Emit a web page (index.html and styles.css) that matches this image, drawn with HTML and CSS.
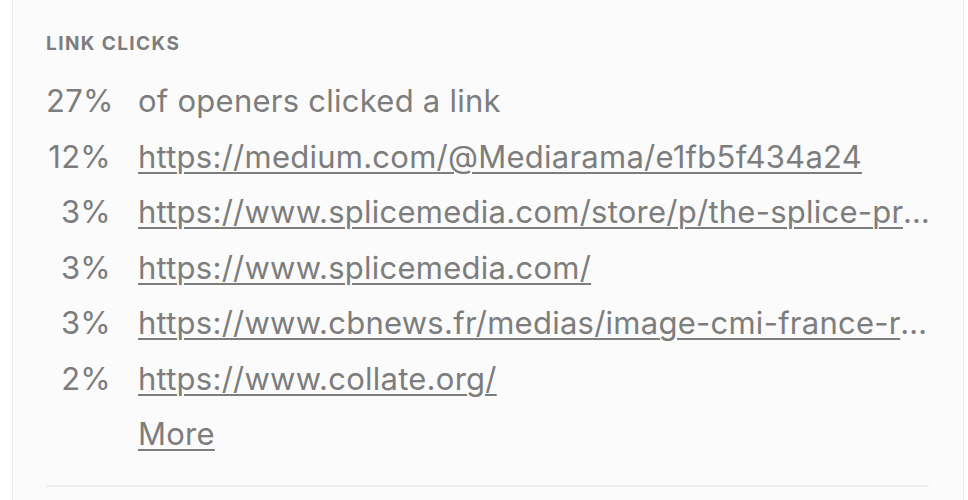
FILE: index.html
```html
<!DOCTYPE html>
<html lang="en">
<head>
    <meta charset="UTF-8">
    <meta name="viewport" content="width=device-width, initial-scale=1.0">
    <title>Link Clicks</title>
    <link rel="stylesheet" href="styles.css">
</head>
<body>
    <div class="page">
        <div class="card">
            <h2 class="card-title">LINK CLICKS</h2>
            <div class="clicks">
                <span class="pct">27%</span>
                <span class="label">of openers clicked a link</span>

                <span class="pct">12%</span>
                <a href="#" class="link">https://medium.com/@Mediarama/e1fb5f434a24</a>

                <span class="pct">3%</span>
                <a href="#" class="link">https://www.splicemedia.com/store/p/the-splice-present-imperfect-report</a>

                <span class="pct">3%</span>
                <a href="#" class="link">https://www.splicemedia.com/</a>

                <span class="pct">3%</span>
                <a href="#" class="link">https://www.cbnews.fr/medias/image-cmi-france-recrute-un-directeur</a>

                <span class="pct">2%</span>
                <a href="#" class="link">https://www.collate.org/</a>

                <span class="pct"></span>
                <a href="#" class="link">More</a>
            </div>
            <div class="divider"></div>
        </div>
    </div>
</body>
</html>
```

FILE: styles.css
```css
* {
    margin: 0;
    padding: 0;
    box-sizing: border-box;
}

html, body {
    height: 100%;
    overflow: hidden;
}

body {
    font-family: Inter, Roboto, 'Liberation Sans', sans-serif;
    background-color: #fff;
    color: #7d7d7d;
}

.page {
    padding: 0 4px 0 12px;
}

.card {
    background-color: #fbfbfb;
    border-left: 1px solid #ebebeb;
    border-right: 1px solid #ebebeb;
    padding: 34px 28px 40px 33px;
    min-height: 520px;
}

.card-title {
    font-size: 19px;
    line-height: 20px;
    font-weight: bold;
    letter-spacing: 1.4px;
    color: #7d7d7d;
    margin-bottom: 19px;
}

.clicks {
    display: grid;
    grid-template-columns: 65px minmax(0, 1fr);
    column-gap: 27px;
    font-size: 31px;
    line-height: 55.5px;
    letter-spacing: 0.25px;
}

.pct {
    text-align: right;
}

.link {
    color: #7d7d7d;
    text-decoration: underline;
    text-decoration-thickness: 2px;
    text-underline-offset: 4px;
    white-space: nowrap;
    overflow: hidden;
    text-overflow: ellipsis;
}

.divider {
    height: 2px;
    background-color: #efefef;
    margin: 23px 6px 0 0;
}
```
